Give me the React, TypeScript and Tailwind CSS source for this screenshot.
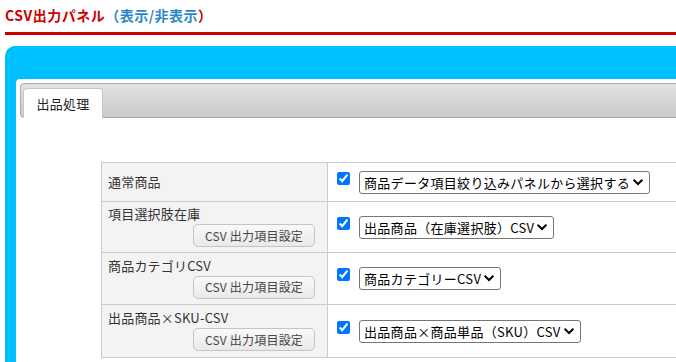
import React from "react";

const Chevron = () => (
  <svg width="10" height="7" viewBox="0 0 10 7" className="shrink-0">
    <path d="M1.3 1.4 L5 5 L8.7 1.4" fill="none" stroke="#000" strokeWidth="2" strokeLinecap="square" />
  </svg>
);

const Select = ({ text }: { text: string }) => (
  <div className="flex h-[23px] items-center gap-[3px] rounded-[3px] border border-[#767676] bg-white pl-[4px] pr-[6px] text-[13px] leading-[17px] text-black whitespace-nowrap">
    <span className="tracking-[0.3px]">{text}</span>
    <Chevron />
  </div>
);

const CsvButton = () => (
  <button
    type="button"
    className="h-[23px] w-[122px] self-end rounded-[5px] border border-[#c5c5c5] bg-linear-to-b from-[#f9f9f9] to-[#e9e9e9] text-[12px] leading-[16px] tracking-[0.2px] text-[#454545]"
  >
    CSV 出力項目設定
  </button>
);

type Row = { label: string; select: string; button: boolean; h: string };

const rows: Row[] = [
  { label: "通常商品", select: "商品データ項目絞り込みパネルから選択する", button: false, h: "h-[39px]" },
  { label: "項目選択肢在庫", select: "出品商品（在庫選択肢）CSV", button: true, h: "h-[51px]" },
  { label: "商品カテゴリCSV", select: "商品カテゴリーCSV", button: true, h: "h-[52px]" },
  { label: "出品商品×SKU-CSV", select: "出品商品×商品単品（SKU）CSV", button: true, h: "h-[53px]" },
];

export default function App() {
  return (
    <div className="h-[362px] w-[676px] overflow-hidden bg-white font-['Noto_Sans_CJK_JP','Noto_Sans',sans-serif]">
      <div className="w-[760px]">
        <div className="ml-[5px] h-[35px] border-b-[3px] border-[#cc0000] pt-[5px] text-[14px] font-bold leading-[20px] tracking-[0.5px]">
          <span className="text-[#cc0000]">CSV出力パネル</span>
          <span className="text-[#2a88c9]">（表示/非表示</span>
          <span className="text-[#cc0000]">）</span>
        </div>

        <div className="ml-[5px] mt-[11px] rounded-tl-[10px] bg-[#00bfff] pl-[11px] pt-[33px]">
          <div className="rounded-tl-[4px] bg-white pl-[4px] pt-[4px] pb-[20px]">
            <div className="flex h-[35px] items-end rounded-[4px] border border-[#aaaaaa] bg-linear-to-b from-[#e3e3e3] to-[#cacaca] pl-[2px]">
              <div className="relative -mb-px flex h-[30px] w-[80px] justify-center rounded-t-[4px] border border-b-0 border-[#c5c5c5] bg-white pt-[6px] text-[13px] leading-[17px] tracking-[0.3px] text-[#222]">
                出品処理
              </div>
            </div>

            <div className="ml-[81px] mt-[44px] w-[640px] border-l border-t border-[#cccccc]">
              {rows.map((r) => (
                <div key={r.label} className={`flex ${r.h} border-b border-[#cccccc]`}>
                  <div className="flex w-[226px] shrink-0 flex-col justify-center border-r border-[#cccccc] bg-[#f3f3f3] pl-[6px] pr-[12px] text-[13px] leading-[17px] tracking-[0.2px] text-[#333]">
                    <span className="-mt-[2px]">{r.label}</span>
                    {r.button && (
                      <div className="mt-[2px] flex justify-end">
                        <CsvButton />
                      </div>
                    )}
                  </div>
                  <div className="flex flex-1 items-center pl-[9px]">
                    <div className="flex items-start gap-[9px]">
                      <input type="checkbox" defaultChecked className="m-0 mt-[1px] h-[13px] w-[13px]" />
                      <Select text={r.select} />
                    </div>
                  </div>
                </div>
              ))}
            </div>
          </div>
        </div>
      </div>
    </div>
  );
}
